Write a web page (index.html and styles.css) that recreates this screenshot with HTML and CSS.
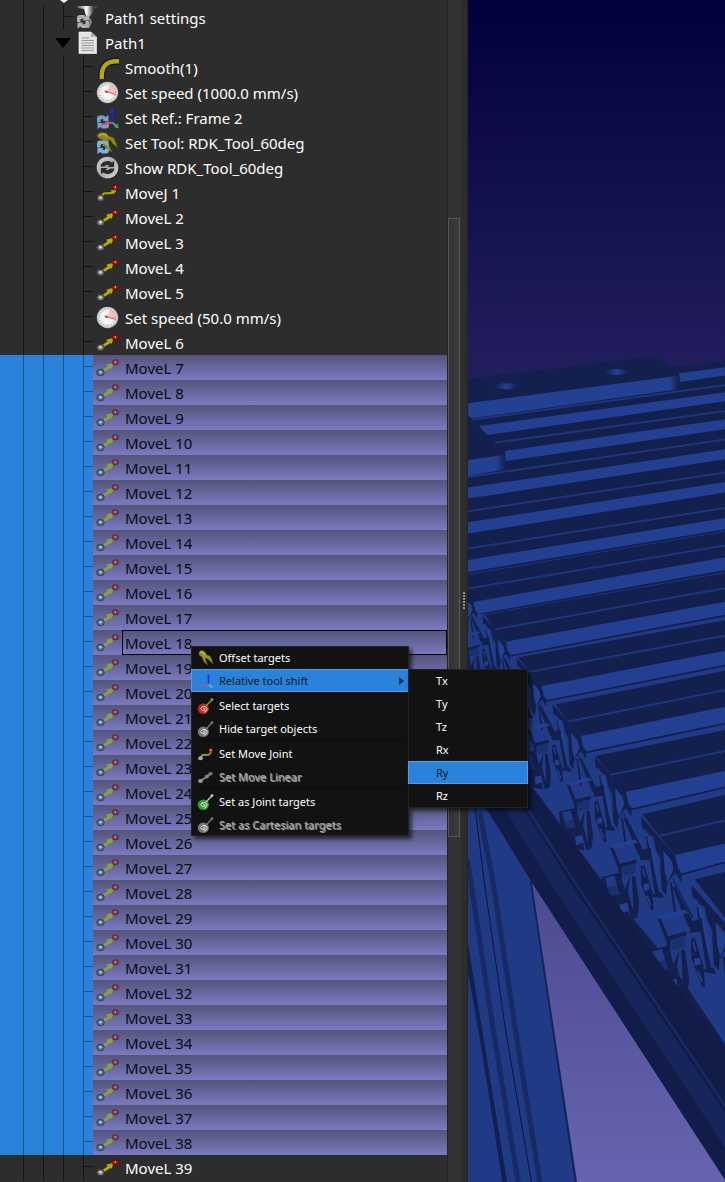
FILE: index.html
```html
<!DOCTYPE html>
<html lang="en">
<head>
<meta charset="utf-8">
<meta name="viewport" content="width=device-width, initial-scale=1">
<title>Path1 – station tree</title>
<link rel="stylesheet" href="styles.css">
</head>
<body>
<svg class="sprite" aria-hidden="true">
  <defs>
    <radialGradient id="dial"><stop offset="0" stop-color="#fff"/><stop offset=".75" stop-color="#f0eeee"/><stop offset="1" stop-color="#b5b5b5"/></radialGradient>
    <linearGradient id="steel" x1="0" x2="1"><stop offset="0" stop-color="#555"/><stop offset=".45" stop-color="#fff"/><stop offset=".8" stop-color="#333"/><stop offset="1" stop-color="#777"/></linearGradient>
    <linearGradient id="disc" x1="0" y1="0" x2="1" y2="1"><stop offset="0" stop-color="#d8d8d8"/><stop offset=".5" stop-color="#a8a8a8"/><stop offset="1" stop-color="#ddd"/></linearGradient>
  </defs>
  <symbol id="cycle" viewBox="0 0 14 14">
    <path d="M1 7.500V3.500Q1 .5 4 .5H8L9.500 2 12.500 0V6H6.500L8 4.200H5.500Q4.500 4.200 4.500 5.500V7.500Z M13 6.500V10.500Q13 13.500 10 13.500H6L4.500 12 1.500 14V8H7.500L6 9.800H8.500Q9.500 9.800 9.500 8.500V6.500Z"/>
  </symbol>
  <symbol id="movel" viewBox="0 0 26 25">
    <path class="ic-arrow" d="M6.500 14.700 11.500 11.500 10.200 9.800 17.500 7.700 15.800 13.700 14.500 13 8 17Z"/>
    <ellipse class="ic-ball" cx="4.500" cy="17.500" rx="3.800" ry="3.300"/><circle class="ic-glint" cx="4.500" cy="17.200" r="1.300"/>
    <ellipse class="ic-tip" cx="19.300" cy="7.300" rx="3.200" ry="2.600"/><circle class="ic-glint" cx="19.300" cy="7" r=".8"/>
  </symbol>
  <symbol id="movej" viewBox="0 0 26 25">
    <path class="ic-curve" d="M6 16C7 12.500 9 13.300 12 13.300S19 13 19 9"/>
    <path class="ic-arrow" d="M14.500 10 20.500 10.500 17.500 14.500Z"/>
    <ellipse class="ic-ball" cx="4.500" cy="18" rx="3.500" ry="3.200"/><circle class="ic-glint" cx="4.500" cy="17.700" r="1.200"/>
    <ellipse class="ic-tip" cx="19.300" cy="7.300" rx="3" ry="2.600"/><circle class="ic-glint" cx="19.300" cy="7" r=".8"/>
  </symbol>
  <symbol id="smooth" viewBox="0 0 26 25">
    <path d="M5.700 24V21C5.700 11.500 11 6.200 20 6.200H23" fill="none" stroke="#111" stroke-width="7"/>
    <path d="M5.700 24V21C5.700 11.500 11 6.200 20 6.200H23" fill="none" stroke="#b5ab00" stroke-width="4.500"/>
  </symbol>
  <symbol id="speed" viewBox="0 0 26 25">
    <circle cx="11.500" cy="12.500" r="10.700" fill="url(#dial)"/>
    <path d="M11.500 12.500 14 4A9 9 0 0 1 20 15Z" fill="#f8c0c0"/>
    <circle cx="11.500" cy="12.500" r="8" fill="none" stroke="#999" stroke-width="1.500" stroke-dasharray=".7 2"/>
    <path d="M8.500 11 20 14.500" stroke="#e85a5a" stroke-width="1"/><circle cx="10.500" cy="11.800" r="1.200" fill="#c22"/>
  </symbol>
  <symbol id="frame" viewBox="0 0 26 25">
    <use href="#cycle" x="0" y="10" width="14" height="14" fill="#6fa3d8"/>
    <path d="M16.300 17.500V5" stroke="#1c22d8" stroke-width="2"/><path d="M14.300 7.500 16.300 2.500 18.300 7.500Z" fill="#2a2aee"/>
    <path d="M16.300 17.500 5 19.500" stroke="#e0455a" stroke-width="1.800"/>
    <path d="M16.300 17.500 20 20.500" stroke="#3fae83" stroke-width="1.800"/><path d="M22.800 23.500 18 22 21.500 18.500Z" fill="#3fae83"/>
  </symbol>
  <symbol id="tool" viewBox="0 0 26 25">
    <path d="M1 5 5 2 10 3 13 6 18 8 20 13 22 18 17 14 14 10 11 10 13 15 16 22 11 18 7 10 2 8Z" fill="#8e8a1c" stroke="#4c4a10" stroke-width=".7"/>
    <path d="M3 5 9 4 11 7" stroke="#c8c23a" fill="none"/>
    <use href="#cycle" x="0" y="10" width="14" height="14" fill="#7fb2e4"/>
    <path d="M7 13 11 15 16 22 10 18Z" fill="#8e8a1c"/>
  </symbol>
  <symbol id="show" viewBox="0 0 26 25">
    <circle cx="11.500" cy="12.500" r="10.800" fill="url(#disc)"/>
    <path d="M4.500 11.500A7 6 0 0 1 16 7.500L18 6V12H11.500L13.300 10.300A4 3 0 0 0 8.500 11.500ZM18.500 13.500A7 6 0 0 1 7 17.500L5 19V13H11.500L9.700 14.700A4 3 0 0 0 14.500 13.500Z" fill="#2b2b2b"/>
  </symbol>
  <symbol id="settings" viewBox="0 0 26 25">
    <path d="M1 1H22L18 4 16 9 13 12V15H10V11L8 4 2 3Z" fill="url(#steel)"/><path d="M13 13 15 17 12 23" stroke="#888" stroke-width="2" fill="none"/>
    <use href="#cycle" x="0" y="9.500" width="14" height="14" fill="#b0b0b0"/>
  </symbol>
  <symbol id="doc" viewBox="0 0 26 25">
    <path d="M3 2H15L20.500 7V23.500H3Z" fill="#e4e4e2" stroke="#fff" stroke-width=".6"/><path d="M15 2V7H20.500Z" fill="#aaa"/>
    <path d="M5.500 8H13M5.500 10.500H18M5.500 13H18M5.500 15.500H18M5.500 18H18M5.500 20.500H18" stroke="#999" stroke-width="1"/>
  </symbol>
  <symbol id="m-tool" viewBox="0 0 18 18">
    <path d="M2 3 5 1 8 3 10 6 13 7 15 11 16 15 12 11 9 9 8 10 11 16 7 13 5 8 2 6Z" fill="#99942a" stroke="#55520f" stroke-width=".6"/><path d="M3 3 7 4 8 6" stroke="#d0ca60" fill="none"/>
  </symbol>
  <symbol id="m-frame" viewBox="0 0 18 18">
    <path d="M11.500 12V4" stroke="#2a2fe0" stroke-width="1.500"/><path d="M10 5.500 11.500 2 13 5.500Z" fill="#2a2fe0"/>
    <path d="M11.500 12.500 2 14" stroke="#c0507c" stroke-width="1.600"/><path d="M11.500 12.500 15.500 15.500" stroke="#5cc09c" stroke-width="1.600"/>
  </symbol>
  <symbol id="m-target" viewBox="0 0 18 18">
    <ellipse class="face" cx="6.300" cy="11.800" rx="5.600" ry="5.200"/><path d="M6 11.500A1.200 1.200 0 0 1 8 12.500 2.300 2.200 0 0 1 3.800 11.500 3.300 3.200 0 0 1 10 11.500 4 4 0 0 1 7 15.300" fill="none" stroke="#eee" stroke-width="1"/>
    <path class="pin" d="M9 9 15 2.800"/><circle class="pinhead" cx="15" cy="2.600" r="1.400"/>
  </symbol>
  <symbol id="m-joint" viewBox="0 0 18 18">
    <path d="M4 13C5 8.500 7 10 10 10S14 9 14 5" fill="none" stroke="#b9b000" stroke-width="1.600"/>
    <ellipse cx="3.500" cy="13.300" rx="2.400" ry="2" fill="#aaa"/><circle cx="13.800" cy="5.500" r="1.900" fill="#c81c1c"/><circle cx="13.800" cy="5" r=".7" fill="#fff"/>
  </symbol>
  <symbol id="m-linear" viewBox="0 0 18 18">
    <path d="M4 12.500 13.500 6" stroke="#8a8a8a" stroke-width="1.800"/><ellipse cx="3.500" cy="13" rx="2.500" ry="2" fill="#999"/><ellipse cx="13.500" cy="5.800" rx="2.200" ry="1.700" fill="#777"/><circle cx="10" cy="8.500" r="1.900" fill="#8a8a8a"/>
  </symbol>
</svg>

<main class="workspace">
  <ul class="tree" role="tree" aria-label="Station tree" id="tree"></ul>
  <div class="scroll"><div class="thumb"></div></div>
  <div class="splitter"><span class="grip"></span></div>
  <section class="view" aria-label="3D view">
    <svg class="scene" viewBox="468 0 257 1182" preserveAspectRatio="xMinYMin slice">
      <defs>
        <linearGradient id="sky" gradientUnits="userSpaceOnUse" x1="0" y1="0" x2="0" y2="1182">
          <stop offset="0" stop-color="#02003c"/><stop offset=".3" stop-color="#211d5c"/><stop offset=".76" stop-color="#4e4b92"/><stop offset="1" stop-color="#6664b0"/>
        </linearGradient>
        <linearGradient id="fadeA" x1="0" x2="1"><stop offset=".96" stop-color="#234093"/><stop offset="1" stop-color="#13204d"/></linearGradient>
        <linearGradient id="fadeB" x1="0" x2="1"><stop offset=".75" stop-color="#234093"/><stop offset="1" stop-color="#13204d"/></linearGradient>
        <linearGradient id="hole" x1="0" x2="1"><stop offset="0" stop-color="#13204d"/><stop offset=".5" stop-color="#234093"/><stop offset="1" stop-color="#13204d"/></linearGradient>
        <g id="bracket">
          <path class="f0" d="M-92-105-60-68-40-45V10L-52-15-60-50-72-56-78-66-84-70-90-72Z"/>
          <path class="f0" d="M-80-50-74-48-62 5-50 70-42 108-54 110-62 60-70 10Z"/>
          <path class="f2" d="M-76-45-66-50-56-8-44 40-42 100-52 60-64 0Z"/>
          <path class="f0" d="M-40-45 0 0 8 38 18 48 17 76 2 50-8 58-22 82-24 110-36 95-40 30Z"/>
          <path class="f2" d="M-32-12-10 15-4 38-20 75-28 45Z"/>
          <path class="f0" d="M-10 60-4 66 50 170 46 172Z M-14 76-9 75 4 160-2 165Z"/>
          <path class="f0" d="M-140-100-132-100-90-15-92 0-100 0Z M-97-12-65-20V12L-95 15Z"/>
          <path class="f2" d="M-175-28-110-42-100-34-168-18Z"/>
          <path class="f0" d="M-155 25-105 12V22L-145 34V70H-153Z M-177-20-168-20-148 30-150 50Z"/>
          <path class="f4" d="M-143 34-108 26V50L-140 58Z"/>
          <path class="f0" d="M-118 55-108 60-98 130-102 170-112 170Z M-122 55-128 100-118 140-105 172-118 175-140 100Z"/>
          <path class="f0" d="M-94 30-84 28-62 100-58 150-66 150-92 80Z"/>
          <path class="f2" d="M-85 80-71 78-70 94-84 98Z M-90 38-86 36-80 60-84 62Z M-78 112-74 110-64 138-68 140Z"/>
          <path class="f0" d="M-62 108-38 102-30 118-60 114Z"/>
          <path class="f0" d="M-200 60-150 48-138 90-124 176-160 170-196 110Z"/>
          <path class="f1" d="M-190 62-165 56-158 84-184 90Z"/>
          <path class="f4" d="M-184 90-158 84-150 108-178 112Z"/>
          <path class="f2" d="M-152 135-130 130-126 152-148 160Z"/>
        </g>
      </defs>
      <rect x="468" width="257" height="1182" fill="url(#sky)"/>
      <path class="f0" d="M468 379 645 357Q655 355 660 359L671 367 725 361V1182H468Z"/>

      <g transform="translate(460 340) scale(.33333)">
        <ellipse cx="138" cy="139" rx="36" ry="9" fill="url(#hole)"/><ellipse cx="470" cy="96" rx="36" ry="9" fill="url(#hole)"/>
        <path d="M23 190 655 107V148L35 235 23 225Z" fill="url(#fadeA)"/>
        <path d="M23 360 115 347 137 343V388L23 408Z" fill="url(#fadeB)"/>
        <path class="f3" d="M657 100 800 81V106L660 126ZM57 258 800 156V183L83 285ZM135 333 800 237V267L137 363ZM23 443 800 327V357L23 476ZM23 547 800 425V457L23 581ZM23 660 800 533V567L23 696ZM38 786 800 651V689L50 822Z"/>
        <path class="rib" d="M35 239 800 134M105 308 800 212M23 411 800 298M23 514 800 397M23 626 800 503M23 746 800 616M200 846 800 741"/>
        <path class="hair" d="M23 703 800 573M50 828 800 697"/>
      </g>

      <g transform="translate(460 600) scale(.33333)">
        <path class="f1" d="M23 0 50 40 76 46 175 172 287 313 408 468 548 643 705 838 800 960V1340L640 1100 440 860 205 545 23 300Z"/>
        <path class="f0" d="M76 46 330 0 590-42 800-80V2L137 123 105 90Z"/>
        <path class="f0" d="M175 172 800 60V149L245 256 213 218Z"/>
        <path class="f0" d="M287 313 800 211V317L362 406 325 366Z"/>
        <path class="f0" d="M408 468 800 389V509L497 573 457 527Z"/>
        <path class="f0" d="M548 643 800 584V727L645 763 600 710Z"/>
        <path class="f0" d="M705 838 800 814V960Z"/>
        <path class="f3" d="M137 125 800 4V44L150 168ZM245 258 800 151V195L258 305ZM362 408 800 319V370L378 455ZM497 575 800 511V560L512 628ZM645 765 800 729V785L665 822Z"/>
        <path class="f1" d="M150 168 800 46V60L175 172ZM258 303 800 196V211L287 313ZM378 457 800 370V389L408 468ZM512 629 800 561V584L548 643ZM665 823 800 786V814L705 838Z"/>
        <path class="rib" d="M105 88 590 1 800-36M205 216 800 106M322 365 800 269M450 525 800 452M598 708 800 660"/>
        <path class="slit" d="M150 168 800 46M258 303 800 196M378 457 800 370M512 629 800 561M665 823 800 786"/>
        <use href="#bracket" transform="translate(40 5) scale(.67)"/>
        <use href="#bracket" transform="translate(137 125) scale(.75)"/>
        <use href="#bracket" transform="translate(245 258) scale(.82)"/>
        <use href="#bracket" transform="translate(362 408) scale(.91)"/>
        <use href="#bracket" transform="translate(497 575)"/>
        <use href="#bracket" transform="translate(645 765) scale(1.1)"/>
        <use href="#bracket" transform="translate(805 980) scale(1.2)"/>
        <path d="M23 500H150L240 590 440 868 600 1090 800 1350V1750L215 845 23 600Z" fill="#111c48"/>
        <path class="f1" d="M23 560 75 620 225 870V1750H23Z"/>
      </g>

      <g transform="translate(460 880) scale(.33333)">
        <path d="M130-220 200-220 330 0 800 705V810L265 0Z" fill="#16265a"/>
        <path d="M205-210 340 0 800 685" fill="none" stroke="#172a62" stroke-width="7"/>
        <path d="M190-220 328 0 800 700" fill="none" stroke="#111c48" stroke-width="6"/>
        <path class="f1" d="M23-270 75-220 215 5 350 910H23Z"/>
        <path d="M212 0 348 910" stroke="#14245a" stroke-width="6"/>
        <path d="M23 185 78 520 142 910H128L60 480 23 270Z" fill="#13204f"/>
        <path d="M23-60 95 420 175 910M60-200 98 0 165 440 240 910" fill="none" stroke="#172a63" stroke-width="15"/>
        <path d="M45-220 72 0 135 440 215 910" fill="none" stroke="#0c1538" stroke-width="3"/>
      </g>
      <path d="M532 883 577 1182H725V1180Z" fill="url(#sky)"/>
    </svg>
  </section>
</main>

<div class="menu context" role="menu">
  <button class="item" role="menuitem"><svg class="glyph"><use href="#m-tool"/></svg>Offset targets</button>
  <div class="branch">
    <button class="item active" role="menuitem" aria-haspopup="true" aria-expanded="true"><svg class="glyph"><use href="#m-frame"/></svg>Relative tool shift<span class="more"></span></button>
    <div class="menu submenu" role="menu">
      <button class="item" role="menuitem">Tx</button>
      <button class="item" role="menuitem">Ty</button>
      <button class="item" role="menuitem">Tz</button>
      <button class="item" role="menuitem">Rx</button>
      <button class="item active" role="menuitem">Ry</button>
      <button class="item" role="menuitem">Rz</button>
    </div>
  </div>
  <hr class="rule">
  <button class="item" role="menuitem"><svg class="glyph red"><use href="#m-target"/></svg>Select targets</button>
  <button class="item" role="menuitem"><svg class="glyph"><use href="#m-target"/></svg>Hide target objects</button>
  <hr class="rule">
  <button class="item" role="menuitem"><svg class="glyph"><use href="#m-joint"/></svg>Set Move Joint</button>
  <button class="item" role="menuitem" disabled><svg class="glyph"><use href="#m-linear"/></svg>Set Move Linear</button>
  <hr class="rule">
  <button class="item" role="menuitem"><svg class="glyph green"><use href="#m-target"/></svg>Set as Joint targets</button>
  <button class="item" role="menuitem" disabled><svg class="glyph"><use href="#m-target"/></svg>Set as Cartesian targets</button>
</div>
<script src="tree.js"></script>
</body>
</html>
```

FILE: styles.css
```css
* { box-sizing: border-box; }

:root {
  --panel: #2d2d2d;
  --accent: #2a82da;
  --line: #131313;
  --row: 25px;
}

body {
  margin: 0;
  background: var(--panel);
  color: #fff;
  font-family: "Noto Sans", "Open Sans", sans-serif;
  font-size: 15px;
}

.sprite { position: absolute; width: 0; height: 0; }

.workspace {
  display: grid;
  grid-template-columns: 447fr 14px 7px 257fr;
  height: 100vh;
  overflow: hidden;
}

/* Tree */
.tree {
  margin: 0;
  padding: 0;
  list-style: none;
  overflow: hidden;
  background: var(--panel);
}

.row {
  display: flex;
  height: var(--row);
  padding-left: 96px;
  line-height: 27px;
  white-space: nowrap;
  background-image:
    linear-gradient(var(--line), var(--line)),
    linear-gradient(var(--line), var(--line)),
    linear-gradient(var(--line), var(--line)),
    linear-gradient(var(--line), var(--line)),
    linear-gradient(var(--line), var(--line));
  background-repeat: no-repeat;
  background-size: 1px 100%, 1px 100%, 1px 100%, 1px 100%, 10px 1px;
  background-position: 23px 0, 43px 0, 63px 0, 83px 0, 83px 11px;
}

.row.cut {
  height: 5px;
  padding-left: 60px;
  background-size: 1px 100%, 0 0, 0 0, 0 0, 0 0;
}
.row.cut::before {
  content: "";
  height: 3px;
  border: 4px solid transparent;
  border-top: 3px solid #fff;
  border-bottom: 0;
}

.row.settings {
  padding-left: 76px;
  background-size: 1px 100%, 1px 100%, 1px 100%, 0 0, 10px 1px;
  background-position: 23px 0, 43px 0, 63px 0, 83px 0, 63px 11px;
}

.row.folder {
  align-items: center;
  padding-left: 55px;
  background-size: 1px 100%, 1px 100%, 0 0, 0 0, 0 0;
}
.row.folder::before {
  content: "";
  margin-right: 5px;
  border: 8px solid transparent;
  border-top: 10px solid #000;
  border-bottom: 0;
}
.row.folder .cell { height: var(--row); }

.row.selected {
  --line: #17568f;
  --ball: #47708c;
  --glint: #b5cfe0;
  --tip: #8a3a62;
  --arrow: #8aa23e;
  padding-left: 0;
  color: #0a0a10;
  background-color: var(--accent);
}

.cell { display: flex; flex: 1; }
.selected .cell {
  margin-left: 93px;
  padding-left: 3px;
  background: linear-gradient(#54547a, #7a7ac2);
}

.icon { flex: none; width: 26px; height: 25px; }
.label { flex: 1; padding-left: 3px; }
.current .label { outline: 1px solid #000; outline-offset: -1px; }

.ic-ball { fill: var(--ball, #77736e); stroke: #222; stroke-width: .6; }
.ic-glint { fill: var(--glint, #e4e4e4); }
.ic-tip { fill: var(--tip, #b01010); stroke: #400; stroke-width: .5; }
.ic-arrow { fill: var(--arrow, #b5ab00); }
.ic-curve { fill: none; stroke: var(--arrow, #b5ab00); stroke-width: 2; }

/* Scroll bar and splitter */
.scroll {
  display: grid;
  grid-template-rows: 218fr 619fr 345fr;
  padding-right: 1px;
  background: #333;
  border-left: 1px solid #242424;
}
.thumb {
  grid-row: 2;
  background: linear-gradient(90deg, #333, #3c3c3c);
  border: 1px solid #555;
}
.splitter {
  display: grid;
  place-items: center;
  padding-top: 20px;
  background: var(--panel);
  border-right: 1px solid #222;
}
.grip {
  width: 2px;
  height: 18px;
  background: repeating-linear-gradient(#8a8a8a 0 2px, transparent 2px 3px);
}

/* 3D view */
.view { position: relative; overflow: hidden; }
.scene { position: absolute; inset: 0; width: 100%; height: 100%; }
.f0 { fill: #13204d; }
.f1 { fill: #203a85; }
.f2 { fill: #23408f; }
.f3 { fill: #233f92; }
.f4 { fill: #1a2f6d; }
.rib { fill: none; stroke: #1d3579; stroke-width: 6; }
.hair { fill: none; stroke: #1c3478; stroke-width: 3; }
.slit { fill: none; stroke: #13204d; stroke-width: 5; }

/* Menus */
.menu {
  position: absolute;
  background: #121212;
  box-shadow: 3px 3px 4px rgba(0, 0, 0, .6), 0 0 0 1px #222 inset;
  font-size: 11px;
}
.context { left: 191px; top: 646px; width: 218px; }
.submenu { left: calc(100% - 1px); top: 0; width: 120px; padding-bottom: 1px; }
.branch { position: relative; }

.item {
  display: flex;
  align-items: center;
  width: 100%;
  height: 23px;
  padding: 0 4px 0 5px;
  border: 1px solid transparent;
  background: none;
  color: #fff;
  font: inherit;
  text-align: left;
  white-space: nowrap;
}
.submenu .item { padding-left: 27px; }
.item.active { background: var(--accent); border-color: #4aa0f0; color: #08182c; }
.item:disabled { color: #aaa; text-shadow: 1px 1px #999; }

.glyph {
  flex: none;
  width: 18px;
  height: 18px;
  margin-right: 4px;
  --face: #777;
  --pin: #777;
}
.red { --face: #d02020; --pin: #a09a20; }
.green { --face: #2f9e2f; --pin: #ccc; }
.face { fill: var(--face); }
.pin { stroke: var(--pin); stroke-width: 1.3; }
.pinhead { fill: var(--pin); }

.more {
  margin-left: auto;
  border: 4px solid transparent;
  border-left: 5px solid #12355c;
  border-right: 0;
}
.rule { height: 1px; margin: 0 4px 1px; border: 0; background: #0a0a0a; }
```

FILE: tree.js
```js
const SVG_NS = "http://www.w3.org/2000/svg";
const rows = [
  { kind: "settings", icon: "settings", text: "Path1 settings" },
  { kind: "folder", icon: "doc", text: "Path1" },
  { icon: "smooth", text: "Smooth(1)" },
  { icon: "speed", text: "Set speed (1000.0 mm/s)" },
  { icon: "frame", text: "Set Ref.: Frame 2" },
  { icon: "tool", text: "Set Tool: RDK_Tool_60deg" },
  { icon: "show", text: "Show RDK_Tool_60deg" },
  { icon: "movej", text: "MoveJ 1" }
];
for (let n = 2; n <= 39; n++) {
  if (n === 6) rows.push({ icon: "speed", text: "Set speed (50.0 mm/s)" });
  let kind = "";
  if (n >= 7 && n <= 38) kind = "selected";
  if (n === 18) kind += " current";
  rows.push({ kind, icon: "movel", text: "MoveL " + n });
}

const tree = document.getElementById("tree");
const cut = document.createElement("li");
cut.className = "row cut";
tree.append(cut);

for (const { kind = "", icon, text } of rows) {
  const li = document.createElement("li");
  li.className = ("row " + kind).trim();
  li.setAttribute("role", "treeitem");
  li.setAttribute("aria-selected", String(kind.includes("selected")));
  const cell = document.createElement("div");
  cell.className = "cell";
  const svg = document.createElementNS(SVG_NS, "svg");
  svg.setAttribute("class", "icon");
  const use = document.createElementNS(SVG_NS, "use");
  use.setAttribute("href", "#" + icon);
  svg.append(use);
  const label = document.createElement("span");
  label.className = "label";
  label.textContent = text;
  cell.append(svg, label);
  li.append(cell);
  tree.append(li);
}
```
